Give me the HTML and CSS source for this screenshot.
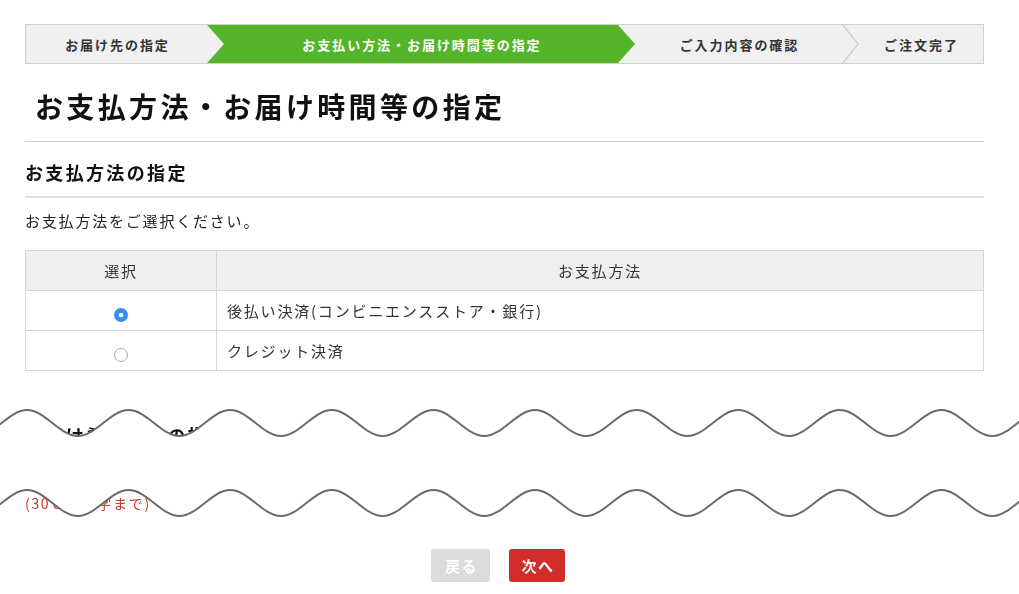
FILE: index.html
```html
<!DOCTYPE html>
<html lang="ja">
<head>
<meta charset="utf-8">
<title>お支払方法・お届け時間等の指定</title>
<link rel="stylesheet" href="styles.css">
</head>
<body>
<div class="page">
  <ol class="steps">
    <li class="step step-1"><span>お届け先の指定</span></li>
    <li class="step step-2 is-current"><span>お支払い方法・お届け時間等の指定</span></li>
    <li class="step step-3"><span>ご入力内容の確認</span></li>
    <li class="step step-4"><span>ご注文完了</span></li>
  </ol>

  <h1 class="page-title">お支払方法・お届け時間等の指定</h1>

  <h2 class="section-title">お支払方法の指定</h2>
  <p class="lead">お支払方法をご選択ください。</p>

  <table class="pay-table">
    <thead>
      <tr><th class="col-select">選択</th><th>お支払方法</th></tr>
    </thead>
    <tbody>
      <tr><td class="cell-radio"><span class="radio is-checked"></span></td><td class="cell-name">後払い決済(コンビニエンスストア・銀行)</td></tr>
      <tr><td class="cell-radio"><span class="radio"></span></td><td class="cell-name">クレジット決済</td></tr>
    </tbody>
  </table>

  <h2 class="section-title section-hidden">お届け希望日時の指定</h2>
  <div class="field"><textarea class="memo"></textarea></div>
  <p class="note">(30００文字まで)</p>

  <div class="actions">
    <button class="btn btn-back">戻る</button>
    <button class="btn btn-next">次へ</button>
  </div>

  <svg class="cut" width="1019" height="135" viewBox="0 0 1019 135" aria-hidden="true">
    <path class="cut-fill" d="M -23.8 41 C -5.5 41 8.7 15 27 15 S 59.5 41 77.8 41 S 110.3 15 128.6 15 S 161.1 41 179.4 41 S 211.9 15 230.2 15 S 262.7 41 281 41 S 313.5 15 331.8 15 S 364.3 41 382.6 41 S 415.1 15 433.4 15 S 465.9 41 484.2 41 S 516.7 15 535 15 S 567.5 41 585.8 41 S 618.3 15 636.6 15 S 669.1 41 687.4 41 S 719.9 15 738.2 15 S 770.7 41 789 41 S 821.5 15 839.8 15 S 872.3 41 890.6 41 S 923.1 15 941.4 15 S 973.9 41 992.2 41 S 1024.7 15 1043 15 L 1043 95 C 1024.7 95 1010.5 121 992.2 121 S 959.7 95 941.4 95 S 908.9 121 890.6 121 S 858.1 95 839.8 95 S 807.3 121 789 121 S 756.5 95 738.2 95 S 705.7 121 687.4 121 S 654.9 95 636.6 95 S 604.1 121 585.8 121 S 553.3 95 535 95 S 502.5 121 484.2 121 S 451.7 95 433.4 95 S 400.9 121 382.6 121 S 350.1 95 331.8 95 S 299.3 121 281 121 S 248.5 95 230.2 95 S 197.7 121 179.4 121 S 146.9 95 128.6 95 S 96.1 121 77.8 121 S 45.3 95 27 95 S -5.5 121 -23.8 121 Z"/>
    <path class="cut-line" d="M -23.8 41 C -5.5 41 8.7 15 27 15 S 59.5 41 77.8 41 S 110.3 15 128.6 15 S 161.1 41 179.4 41 S 211.9 15 230.2 15 S 262.7 41 281 41 S 313.5 15 331.8 15 S 364.3 41 382.6 41 S 415.1 15 433.4 15 S 465.9 41 484.2 41 S 516.7 15 535 15 S 567.5 41 585.8 41 S 618.3 15 636.6 15 S 669.1 41 687.4 41 S 719.9 15 738.2 15 S 770.7 41 789 41 S 821.5 15 839.8 15 S 872.3 41 890.6 41 S 923.1 15 941.4 15 S 973.9 41 992.2 41 S 1024.7 15 1043 15"/>
    <path class="cut-line" d="M -23.8 121 C -5.5 121 8.7 95 27 95 S 59.5 121 77.8 121 S 110.3 95 128.6 95 S 161.1 121 179.4 121 S 211.9 95 230.2 95 S 262.7 121 281 121 S 313.5 95 331.8 95 S 364.3 121 382.6 121 S 415.1 95 433.4 95 S 465.9 121 484.2 121 S 516.7 95 535 95 S 567.5 121 585.8 121 S 618.3 95 636.6 95 S 669.1 121 687.4 121 S 719.9 95 738.2 95 S 770.7 121 789 121 S 821.5 95 839.8 95 S 872.3 121 890.6 121 S 923.1 95 941.4 95 S 973.9 121 992.2 121 S 1024.7 95 1043 95"/>
  </svg>
</div>
</body>
</html>
```

FILE: styles.css
```css
html, body {
  margin: 0;
  padding: 0;
  background: #fff;
}

body {
  font-family: "Noto Sans CJK JP", "Noto Sans", sans-serif;
  color: #222;
}

.page {
  position: relative;
  width: 959px;
  padding: 24px 35px 0 25px;
}

/* step bar */
.steps {
  display: flex;
  height: 38px;
  margin: 0;
  padding: 0;
  list-style: none;
  border: 1px solid #cfcfcf;
  background: #f0f0f0;
}

.step {
  position: relative;
  display: flex;
  align-items: center;
  justify-content: center;
  font-size: 13px;
  font-weight: bold;
  letter-spacing: 0.15em;
  color: #333;
  box-sizing: border-box;
}

.step span {
  padding-left: 0.15em;
}

.step-1 { width: 181px; }
.step-2 { width: 411px; padding-left: 17px; background: #54b52a; color: #fff; }
.step-3 { width: 224px; padding-left: 17px; }
.step-4 { flex: 1; padding-left: 16px; }

.step-1::after,
.step-2::after,
.step-3::after {
  content: "";
  position: absolute;
  top: 0;
  left: 100%;
  width: 17px;
  height: 100%;
  z-index: 2;
}

.step-1::after {
  background: #f0f0f0;
  clip-path: polygon(0 0, 100% 50%, 0 100%);
}

.step-2::after {
  background: #54b52a;
  clip-path: polygon(0 0, 100% 50%, 0 100%);
}

.step-3::after {
  background: #c9c9c9;
  clip-path: polygon(0 0, 1.5px 0, 100% 50%, 1.5px 100%, 0 100%, calc(100% - 1.5px) 50%);
}

/* headings */
.page-title {
  margin: 23px 0 0;
  padding: 0 0 15px 10px;
  font-size: 28px;
  line-height: 39px;
  font-weight: bold;
  letter-spacing: 0.12em;
  color: #111;
  border-bottom: 1px solid #cfcfcf;
}

.section-title {
  margin: 17px 0 0;
  padding: 0 0 11px;
  font-size: 18px;
  line-height: 26px;
  font-weight: bold;
  letter-spacing: 0.13em;
  color: #111;
  border-bottom: 2px solid #e2e2e2;
}

.lead {
  margin: 12px 0 19px;
  font-size: 15px;
  line-height: 21px;
  letter-spacing: 0.12em;
  color: #222;
}

/* table */
.pay-table {
  width: 100%;
  border-collapse: collapse;
  font-size: 15px;
  letter-spacing: 0.12em;
  color: #333;
}

.pay-table tr {
  height: 40px;
}

.pay-table th,
.pay-table td {
  border: 1px solid #d6d6d6;
  padding: 0 10px;
}

.pay-table th {
  background: #efefef;
  font-weight: normal;
  text-align: center;
}

.pay-table .col-select {
  width: 170px;
}

.cell-radio {
  text-align: center;
}

.cell-name {
  text-align: left;
}

.radio {
  display: inline-block;
  box-sizing: border-box;
  width: 14px;
  height: 14px;
  border-radius: 50%;
  border: 1px solid #a9a9a9;
  background: #fff;
  vertical-align: middle;
  position: relative;
  top: 2px;
}

.radio.is-checked {
  border: none;
  background: radial-gradient(circle, #fff 0 2px, #3a8df5 2.6px);
}

/* hidden section */
.section-hidden {
  margin-top: 51px;
}

.field {
  padding-top: 8px;
}

.memo {
  display: block;
  box-sizing: border-box;
  width: 100%;
  height: 20px;
  border: 1px solid #ccc;
}

.note {
  margin: 4px 0 0;
  font-size: 14px;
  line-height: 20px;
  letter-spacing: 0.12em;
  color: #d2352b;
}

/* buttons */
.actions {
  display: flex;
  justify-content: center;
  gap: 19px;
  margin-top: 36px;
  padding-right: 13px;
}

.btn {
  height: 33px;
  padding: 0 0 0 2px;
  border: none;
  border-radius: 3px;
  font-family: "Noto Sans CJK JP", "Noto Sans", sans-serif;
  font-size: 15px;
  font-weight: bold;
  letter-spacing: 0.1em;
  color: #fff;
}

.btn-back { width: 59px; background: #dcdcdc; }
.btn-next { width: 56px; background: #d12d2a; }

/* cut marker */
.cut {
  position: absolute;
  left: 0;
  top: 395px;
  display: block;
}

.cut-fill {
  fill: #fff;
}

.cut-line {
  fill: none;
  stroke: #6b6b6b;
  stroke-width: 2;
}
```
